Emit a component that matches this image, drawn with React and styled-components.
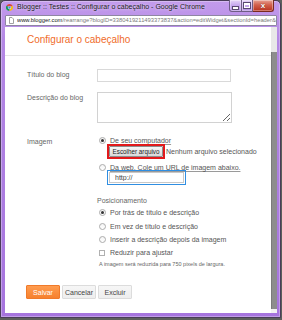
import React from "react";
import styled, { createGlobalStyle } from "styled-components";

const GlobalStyle = createGlobalStyle`
  html, body {
    margin: 0;
    padding: 0;
    background: #5d5f5c;
  }
  body {
    width: 282px;
    height: 320px;
    overflow: hidden;
    font-family: "Liberation Sans", Arial, sans-serif;
  }
`;

const Window = styled.div`
  box-sizing: border-box;
  width: 281px;
  height: 318px;
  display: flex;
  flex-direction: column;
  padding: 0 3px 4px 4px;
  border: 1px solid #4a3d59;
  border-radius: 5px 5px 0 0;
  background: linear-gradient(180deg, #c39bec 0%, #b387e4 40px, #a674de 100%);
  box-shadow: inset 0 0 0 1px rgba(255, 255, 255, 0.3);
`;

const TitleBar = styled.div`
  height: 14px;
  display: flex;
  align-items: flex-start;
`;

const AppIcon = styled.svg`
  width: 7px;
  height: 7px;
  margin: 3px 0 0 1px;
  flex: 0 0 auto;
`;

const TitleText = styled.span`
  margin-left: 4px;
  font-size: 7px;
  line-height: 12px;
  color: #1c1c1c;
  white-space: nowrap;
  text-shadow: 0 0 3px rgba(255, 255, 255, 0.9);
`;

const Controls = styled.div`
  display: flex;
  margin: -1px 3px 0 auto;
`;

const ControlButton = styled.div`
  box-sizing: border-box;
  height: 12px;
  width: ${(p) => (p.$kind === "close" ? "21px" : p.$kind === "min" ? "13px" : "11px")};
  display: flex;
  align-items: center;
  justify-content: center;
  border: 1px solid ${(p) => (p.$kind === "close" ? "#7a2a20" : "#6f5d86")};
  border-top: none;
  border-left-width: ${(p) => (p.$kind === "min" ? "1px" : "0")};
  border-radius: ${(p) => (p.$kind === "min" ? "0 0 0 3px" : p.$kind === "close" ? "0 0 3px 0" : "0")};
  background: ${(p) =>
    p.$kind === "close"
      ? "linear-gradient(180deg, #e7a294 0%, #d2604c 45%, #b8321f 100%)"
      : "linear-gradient(180deg, #e6d6f6 0%, #c8aaee 45%, #b08ce0 100%)"};
  box-shadow: inset 0 0 0 1px rgba(255, 255, 255, 0.35);
`;

const MinGlyph = styled.span`
  width: 5px;
  height: 2px;
  margin-top: 4px;
  background: #fff;
  box-shadow: 0 0 0 1px #5a4a70;
`;

const MaxGlyph = styled.span`
  box-sizing: border-box;
  width: 6px;
  height: 5px;
  border: 1px solid #fff;
  border-top-width: 2px;
  box-shadow: 0 0 0 1px #5a4a70;
`;

const CloseGlyph = styled.span`
  font-size: 8px;
  line-height: 8px;
  font-weight: bold;
  color: #fff;
  text-shadow: 0 0 1px #5a1a10;
`;

const AddressBar = styled.div`
  box-sizing: border-box;
  height: 11px;
  display: flex;
  align-items: center;
  background: #fff;
  border: 1px solid #8f86a3;
  border-radius: 1px;
  overflow: hidden;
`;

const DocIcon = styled.svg`
  width: 5px;
  height: 7px;
  margin-left: 3px;
  flex: 0 0 auto;
`;

const Url = styled.span`
  flex: 1;
  min-width: 0;
  overflow: hidden;
  margin-left: 3px;
  font-size: 5.8px;
  line-height: 9px;
  color: #7a7a7a;
  white-space: nowrap;
`;

const Host = styled.span`
  color: #202020;
`;

const Body = styled.div`
  flex: 1;
  min-height: 0;
  display: flex;
  margin-top: 1px;
`;

const Page = styled.div`
  flex: 1;
  min-width: 0;
  background: #fff;
  padding-top: 6px;
  overflow: hidden;
`;

const Heading = styled.h1`
  margin: 0;
  padding: 0 22px;
  font-size: 10px;
  line-height: 14px;
  font-weight: normal;
  color: #f06c2a;
`;

const Divider = styled.div`
  height: 1px;
  margin-top: 8px;
  background: #e6e6e6;
`;

const Form = styled.div`
  padding-left: 22px;
`;

const FieldRow = styled.div`
  display: grid;
  grid-template-columns: 70px auto;
  margin-top: ${(p) => p.$gap}px;
`;

const FieldLabel = styled.div`
  padding-top: ${(p) => p.$top || 1}px;
  font-size: 7px;
  line-height: 9px;
  color: #666;
`;

const TextInput = styled.input`
  box-sizing: border-box;
  display: block;
  width: 134px;
  height: 13px;
  margin: 0;
  padding: 0 4px;
  border: 1px solid #d9d9d9;
  outline: none;
  font: 7px "Liberation Sans", Arial, sans-serif;
`;

const TextArea = styled.textarea`
  box-sizing: border-box;
  display: block;
  width: 135px;
  height: 31px;
  margin: 0;
  padding: 2px 4px;
  border: 1px solid #d2d2d2;
  outline: none;
  resize: both;
  font: 7px "Liberation Sans", Arial, sans-serif;
`;

const Options = styled.div`
  display: flex;
  flex-direction: column;
  align-items: flex-start;
`;

const OptionRow = styled.div`
  height: 9px;
  display: flex;
  align-items: center;
  gap: 4px;
  margin-top: ${(p) => p.$gap || 0}px;
  font-size: 7px;
  line-height: 9px;
  color: #555;
  white-space: nowrap;
`;

const OptionText = styled.span`
  text-decoration: ${(p) => (p.$link ? "underline" : "none")};
  text-decoration-color: #9a9a9a;
`;

const Radio = styled.span`
  box-sizing: border-box;
  position: relative;
  width: 7px;
  height: 7px;
  margin-left: 2px;
  border: 1px solid #acacac;
  border-radius: 50%;
  background: linear-gradient(180deg, #f4f4f4, #ffffff);

  &::after {
    content: "";
    display: ${(p) => (p.$checked ? "block" : "none")};
    position: absolute;
    left: 1px;
    top: 1px;
    width: 3px;
    height: 3px;
    border-radius: 50%;
    background: #333;
  }
`;

const Check = styled.span`
  box-sizing: border-box;
  width: 6px;
  height: 6px;
  margin: 0 1px 0 2px;
  border: 1px solid #b0b0b0;
  background: #fff;
`;

const FileRow = styled.div`
  display: flex;
  align-items: center;
  margin: -1px 0 0 10px;
  font-size: 7px;
  color: #555;
  white-space: nowrap;
`;

const RedMark = styled.span`
  display: flex;
  border: 2px solid #e2191b;
`;

const ChooseButton = styled.span`
  box-sizing: border-box;
  width: 54px;
  height: 11px;
  display: flex;
  align-items: center;
  justify-content: center;
  overflow: hidden;
  border: 1px solid #8e8e8e;
  border-radius: 1px;
  background: linear-gradient(180deg, #f7f7f7, #d8d8d8);
  font-size: 6.3px;
  color: #222;
  white-space: nowrap;
`;

const FileName = styled.span`
  margin-left: 1px;
`;

const BlueMark = styled.div`
  margin: -2px 0 0 10px;
  padding: 1px;
  border: 1px solid #2f8ee2;
`;

const UrlInput = styled.input`
  box-sizing: border-box;
  display: block;
  width: 75px;
  height: 11px;
  margin: 0;
  padding: 0 0 0 5px;
  border: 1px solid #c8c8c8;
  outline: none;
  font: 7px "Liberation Sans", Arial, sans-serif;
  color: #444;
`;

const SubHeading = styled.div`
  margin-top: 11px;
  font-size: 7px;
  line-height: 9px;
  color: #666;
`;

const Note = styled.div`
  margin-top: 4px;
  padding-left: 2px;
  font-size: 5.5px;
  line-height: 7px;
  color: #666;
  white-space: nowrap;
`;

const ButtonRow = styled.div`
  display: flex;
  gap: 2px;
  margin: 17px 0 0 21px;
`;

const Button = styled.div`
  box-sizing: border-box;
  width: 34px;
  height: 14px;
  display: flex;
  align-items: center;
  justify-content: center;
  border: 1px solid ${(p) => (p.$primary ? "#f07a2a" : "#dcdcdc")};
  border-radius: 1px;
  background: ${(p) =>
    p.$primary ? "linear-gradient(180deg, #ff9c4f, #f6812e)" : "linear-gradient(180deg, #f6f6f6, #eeeeee)"};
  font-size: 7px;
  color: ${(p) => (p.$primary ? "#fff" : "#444")};
`;

const Scrollbar = styled.div`
  width: 6px;
  display: flex;
  flex-direction: column;
  background: #e8e8e8;
`;

const Thumb = styled.div`
  flex: 1;
  margin-top: 25px;
  background: #8d8d8d;
  border-left: 1px solid #7b7b7b;
`;

const ScrollEnd = styled.div`
  height: 4px;
  background: #f3f3f3;
`;

function ChromeLogo() {
  return (
    <AppIcon viewBox="0 0 16 16">
      <path d="M8 8 L1.07 4 A8 8 0 0 1 14.93 4 Z" fill="#db4437" />
      <path d="M8 8 L8 16 A8 8 0 0 1 1.07 4 Z" fill="#0f9d58" />
      <path d="M8 8 L14.93 4 A8 8 0 0 1 8 16 Z" fill="#f4c20d" />
      <circle cx="8" cy="8" r="3.6" fill="#fff" />
      <circle cx="8" cy="8" r="2.7" fill="#4285f4" />
    </AppIcon>
  );
}

const radios = [
  { label: "Por trás de título e descrição", checked: true, gap: 3 },
  { label: "Em vez de título e descrição", gap: 5 },
  { label: "Inserir a descrição depois da imagem", gap: 4 },
];

export default function App() {
  return (
    <>
      <GlobalStyle />
      <Window>
        <TitleBar>
          <ChromeLogo />
          <TitleText>Blogger :: Testes :: Configurar o cabeçalho - Google Chrome</TitleText>
          <Controls>
            <ControlButton $kind="min">
              <MinGlyph />
            </ControlButton>
            <ControlButton $kind="max">
              <MaxGlyph />
            </ControlButton>
            <ControlButton $kind="close">
              <CloseGlyph>x</CloseGlyph>
            </ControlButton>
          </Controls>
        </TitleBar>
        <AddressBar>
          <DocIcon viewBox="0 0 5 7">
            <path d="M0.5 0.5 H3 L4.5 2 V6.5 H0.5 Z" fill="#fff" stroke="#8a8a8a" strokeWidth="0.8" />
          </DocIcon>
          <Url>
            <Host>www.blogger.com</Host>/rearrange?blogID=3380419211493373837&amp;action=editWidget&amp;sectionId=header&amp;o
          </Url>
        </AddressBar>
        <Body>
          <Page>
            <Heading>Configurar o cabeçalho</Heading>
            <Divider />
            <Form>
              <FieldRow $gap={13}>
                <FieldLabel>Título do blog</FieldLabel>
                <TextInput defaultValue="" />
              </FieldRow>
              <FieldRow $gap={10}>
                <FieldLabel>Descrição do blog</FieldLabel>
                <TextArea defaultValue="" />
              </FieldRow>
              <FieldRow $gap={13}>
                <FieldLabel $top={0}>Imagem</FieldLabel>
                <Options>
                  <OptionRow>
                    <Radio $checked />
                    <OptionText $link>De seu computador</OptionText>
                  </OptionRow>
                  <FileRow>
                    <RedMark>
                      <ChooseButton>Escolher arquivo</ChooseButton>
                    </RedMark>
                    <FileName>Nenhum arquivo selecionado</FileName>
                  </FileRow>
                  <OptionRow $gap={4}>
                    <Radio />
                    <OptionText $link>Da web. Cole um URL de imagem abaixo.</OptionText>
                  </OptionRow>
                  <BlueMark>
                    <UrlInput defaultValue="http://" />
                  </BlueMark>
                  <SubHeading>Posicionamento</SubHeading>
                  {radios.map((r) => (
                    <OptionRow key={r.label} $gap={r.gap}>
                      <Radio $checked={r.checked} />
                      <OptionText>{r.label}</OptionText>
                    </OptionRow>
                  ))}
                  <OptionRow $gap={4}>
                    <Check />
                    <OptionText>Reduzir para ajustar</OptionText>
                  </OptionRow>
                  <Note>A imagem será reduzida para 750 pixels de largura.</Note>
                </Options>
              </FieldRow>
            </Form>
            <ButtonRow>
              <Button $primary>Salvar</Button>
              <Button>Cancelar</Button>
              <Button>Excluir</Button>
            </ButtonRow>
          </Page>
          <Scrollbar>
            <Thumb />
            <ScrollEnd />
          </Scrollbar>
        </Body>
      </Window>
    </>
  );
}
